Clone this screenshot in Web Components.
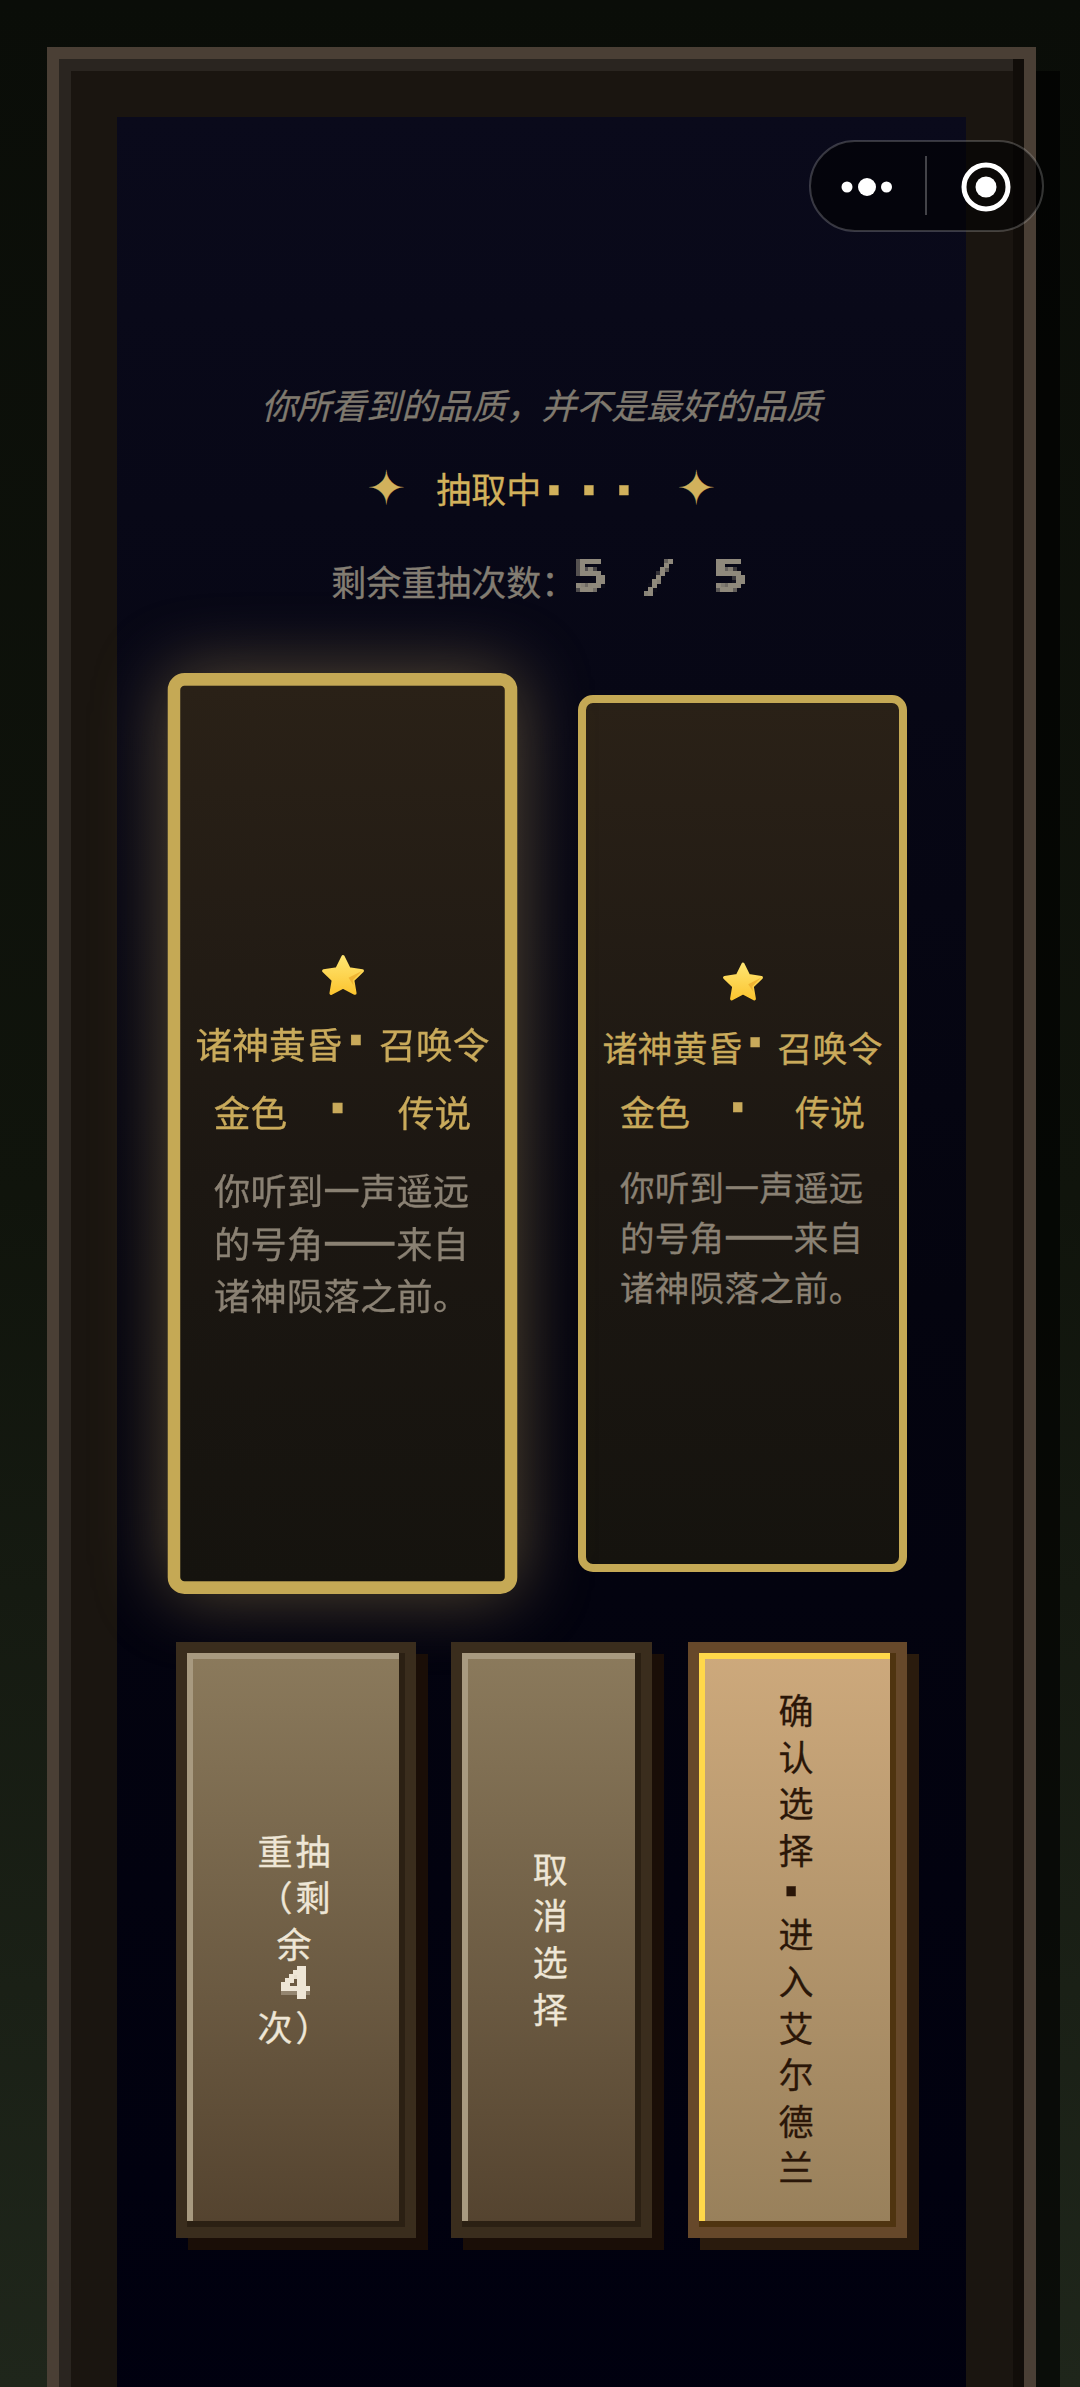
<!DOCTYPE html>
<html lang="zh">
<head>
<meta charset="utf-8">
<title>抽取中</title>
<style>
  html, body { margin: 0; height: 100%; overflow: hidden; }
  body {
    background: linear-gradient(180deg, #0a0d08 0%, #10140c 50%, #1f261b 100%);
    font-family: "Noto Sans CJK SC", "Noto Sans", sans-serif;
    font-size: 35px;
    -webkit-text-stroke: .3px;
  }
</style>
</head>
<body>
<wx-capsule></wx-capsule>
<game-frame>
  <draw-header></draw-header>
  <card-row>
    <draw-card selected></draw-card>
    <draw-card></draw-card>
  </card-row>
  <button-row>
    <action-button style="width:240px">重抽<br>（剩<br>余<pixel-text block>4</pixel-text>次）</action-button>
    <action-button style="width:201px">取<br>消<br>选<br>择</action-button>
    <action-button style="width:219px" primary>确<br>认<br>选<br>择<pixel-dot block>·</pixel-dot>进<br>入<br>艾<br>尔<br>德<br>兰</action-button>
  </button-row>
</game-frame>

<template id="draw-card-tpl">
  <style>
    :host {
      display: flex;
      flex-direction: column;
      align-items: center;
      justify-content: center;
      box-sizing: border-box;
      width: 329px;
      height: 877px;
      padding-top: 6px;
      border: 8px solid #c5a955;
      border-radius: 15px;
      background: linear-gradient(180deg, #2a2117 0%, #1c1712 55%, #15130e 100%);
      color: #c9aa5b;
    }
    :host([selected]) {
      width: 333px;
      border-width: 12px;
      border-radius: 16px;
      transform: scale(1.05);
      box-shadow: 0 0 70px rgba(201, 169, 97, .42);
    }
    svg { display: block; width: 42px; height: 40px; margin-bottom: 21px; }
    .name, .rarity { line-height: 50px; white-space: nowrap; }
    .rarity { margin-top: 14px; }
    .rarity pixel-dot { margin: 0 1em; }
    .desc {
      width: 245px;
      margin-top: 25px;
      font-size: 34.5px;
      letter-spacing: .3px;
      line-height: 50px;
      white-space: nowrap;
      color: #8a8173;
    }
    .desc b { font-weight: 400; -webkit-text-stroke: 2.4px; }
  </style>
  <svg viewBox="0 0 40 38">
    <defs>
      <linearGradient id="s" x1="0" y1="0" x2="0" y2="1">
        <stop offset="0" stop-color="#ffe571"/>
        <stop offset="1" stop-color="#fbc531"/>
      </linearGradient>
    </defs>
    <path d="M20 3 L25.4 13.9 L37.5 15.7 L28.8 24.2 L30.8 36 L20 30.4 L9.2 36 L11.2 24.2 L2.5 15.7 L14.6 13.9 Z" fill="url(#s)" stroke="url(#s)" stroke-width="3" stroke-linejoin="round"/>
    <path d="M37.5 15.7 L28.8 24.2 L29.6 29 L25 22 Z" fill="#e9a92b" opacity=".75"/>
  </svg>
  <div class="name">诸神黄昏<pixel-dot style="--dy:-2px">·</pixel-dot>召唤令</div>
  <div class="rarity">金色<pixel-dot style="--dy:-3px">·</pixel-dot>传说</div>
  <div class="desc">
    <div>你听到一声遥远</div>
    <div>的号角<b>——</b>来自</div>
    <div>诸神陨落之前。</div>
  </div>
</template>

<script>
class WxCapsule extends HTMLElement {
  connectedCallback() {
    this.attachShadow({ mode: 'open' });
    this.shadowRoot.innerHTML = `
      <style>
        :host {
          position: absolute;
          left: 809px;
          top: 140px;
          z-index: 5;
          display: block;
          width: 235px;
          height: 92px;
        }
        svg { display: block; }
      </style>
      <svg width="235" height="92" viewBox="0 0 235 92">
        <rect x="1" y="1" width="233" height="90" rx="45" fill="rgba(0,0,0,.55)" stroke="rgba(255,255,255,.2)" stroke-width="2"/>
        <circle cx="38" cy="47" r="5.5" fill="#fff"/>
        <circle cx="58" cy="47" r="9" fill="#fff"/>
        <circle cx="77.5" cy="47" r="5.5" fill="#fff"/>
        <rect x="116" y="16" width="2" height="59" fill="rgba(255,255,255,.25)"/>
        <circle cx="177" cy="47" r="22" fill="none" stroke="#fff" stroke-width="5"/>
        <circle cx="177" cy="47" r="10.5" fill="#fff"/>
      </svg>
    `;
  }
}

class GameFrame extends HTMLElement {
  connectedCallback() {
    this.attachShadow({ mode: 'open' });
    this.shadowRoot.innerHTML = `
      <style>
        :host {
          display: block;
          width: 989px;
          height: 2340px;
          margin: 47px 0 0 47px;
          overflow: hidden;
          box-shadow: 24px 24px 0 rgba(0, 0, 0, .65);
        }
        .box {
          box-sizing: border-box;
          height: 2500px;
          padding: 58px;
          border: 12px solid #4a3f35;
          background: #1a1510;
          box-shadow: inset -11px -11px 0 #110d09, inset 12px 12px 0 #2a2520;
        }
        .stage {
          box-sizing: border-box;
          height: 100%;
          padding: 262px 59px 0 58.5px;
          background: linear-gradient(180deg, #0a0a1b 0%, #04040f 50%, #00000f 100%);
        }
      </style>
      <div class="box"><div class="stage"><slot></slot></div></div>
    `;
  }
}

class PixelText extends HTMLElement {
  connectedCallback() {
    this.attachShadow({ mode: 'open' });
    const n = this.textContent.length;
    this.shadowRoot.innerHTML = `
      <style>
        :host {
          display: inline-block;
          width: ${n * 35}px;
          height: 40px;
          font: bold 42px/40px "DejaVu Sans Mono", monospace;
          -webkit-text-stroke: 0;
          text-align: left;
        }
        :host([block]) { display: block; height: 36px; margin: 0 auto; line-height: 36px; }
        .px { height: 100%; filter: url(#px); }
        span {
          display: inline-block;
          white-space: pre;
          transform: scaleX(1.38);
          transform-origin: 0 50%;
        }
        ::slotted(i) { font-style: normal; font-weight: 400; }
        svg { position: absolute; width: 0; height: 0; }
      </style>
      <svg><filter id="px" x="0" y="0" width="100%" height="100%" color-interpolation-filters="sRGB">
        <feFlood x="1" y="1" width="1" height="1"/>
        <feComposite width="4" height="4"/>
        <feTile result="grid"/>
        <feComposite in="SourceGraphic" in2="grid" operator="in"/>
        <feMorphology operator="dilate" radius="2"/>
      </filter></svg>
      <div class="px"><span><slot></slot></span></div>
    `;
  }
}

class PixelDot extends HTMLElement {
  connectedCallback() {
    this.attachShadow({ mode: 'open' });
    this.shadowRoot.innerHTML = `
      <style>
        :host {
          display: inline-block;
          box-sizing: border-box;
          width: 35px;
          padding-right: 6px;
          text-align: center;
          line-height: 0;
          vertical-align: var(--dy, 0);
        }
        :host([block]) {
          display: flex;
          align-items: center;
          justify-content: center;
          width: auto;
          height: 38px;
        }
        span { font: bold 64px/0 "Liberation Sans", sans-serif; }
      </style>
      <span><slot></slot></span>
    `;
  }
}

class DrawHeader extends HTMLElement {
  connectedCallback() {
    this.attachShadow({ mode: 'open' });
    this.shadowRoot.innerHTML = `
      <style>
        :host { display: block; text-align: center; white-space: nowrap; }
        .quote { height: 50px; line-height: 50px; font-style: italic; color: #7f796e; }
        .title {
          display: flex;
          justify-content: center;
          align-items: center;
          gap: 30px;
          height: 50px;
          margin-top: 34px;
          line-height: 50px;
          color: #d1b15c;
        }
        .spark { width: 40px; font: 46px/50px "DejaVu Sans", sans-serif; }
        .count {
          display: flex;
          justify-content: center;
          align-items: center;
          height: 50px;
          margin-top: 42px;
          color: #837d72;
        }
        .count pixel-text { color: #8f897c; margin: -8px 3px 0 -3px; }
      </style>
      <div class="quote">你所看到的品质，并不是最好的品质</div>
      <div class="title">
        <span class="spark">✦</span>
        <span>抽取中<pixel-dot style="--dy:-9px">·</pixel-dot><pixel-dot style="--dy:-9px">·</pixel-dot><pixel-dot style="--dy:-9px">·</pixel-dot></span>
        <span class="spark">✦</span>
      </div>
      <div class="count"><span>剩余重抽次数：</span><pixel-text>5<i> / </i>5</pixel-text></div>
    `;
  }
}

class CardRow extends HTMLElement {
  connectedCallback() {
    this.attachShadow({ mode: 'open' });
    this.shadowRoot.innerHTML = `
      <style>
        :host { display: flex; gap: 69.5px; margin-top: 89.5px; }
      </style>
      <slot></slot>
    `;
  }
}

class DrawCard extends HTMLElement {
  connectedCallback() {
    this.attachShadow({ mode: 'open' });
    this.shadowRoot.appendChild(document.getElementById('draw-card-tpl').content.cloneNode(true));
  }
}

class ButtonRow extends HTMLElement {
  connectedCallback() {
    this.attachShadow({ mode: 'open' });
    this.shadowRoot.innerHTML = `
      <style>
        :host { position: relative; z-index: 1; display: flex; gap: 35.7px; margin-top: 70.5px; }
      </style>
      <slot></slot>
    `;
  }
}

class ActionButton extends HTMLElement {
  connectedCallback() {
    this.attachShadow({ mode: 'open' });
    this.shadowRoot.innerHTML = `
      <style>
        :host {
          display: flex;
          align-items: center;
          justify-content: center;
          box-sizing: border-box;
          height: 596px;
          padding-bottom: 4px;
          border: 11.5px solid #3a2d1d;
          background: linear-gradient(180deg, #8b7a5c 0%, #54432f 100%);
          background-clip: padding-box;
          box-shadow: inset -6px -6px 0 #2b2013, inset 6px 6px 0 #a89a80, 12px 12px 0 #1a0e07;
          color: #eee6d6;
          text-align: center;
          line-height: 46.6px;
          letter-spacing: 2.88px;
        }
        :host([primary]) {
          border-color: #66482a;
          background-image: linear-gradient(180deg, #cda97c 0%, #98805b 100%);
          box-shadow: inset -6px -6px 0 #4f3410, inset 6px 6px 0 #ffd84a, 12px 12px 0 #2a1b0d;
          color: #2a1608;
        }
        div { width: max-content; }
      </style>
      <div><slot></slot></div>
    `;
  }
}

customElements.define('wx-capsule', WxCapsule);
customElements.define('game-frame', GameFrame);
customElements.define('pixel-text', PixelText);
customElements.define('pixel-dot', PixelDot);
customElements.define('draw-header', DrawHeader);
customElements.define('card-row', CardRow);
customElements.define('draw-card', DrawCard);
customElements.define('button-row', ButtonRow);
customElements.define('action-button', ActionButton);
</script>
</body>
</html>
